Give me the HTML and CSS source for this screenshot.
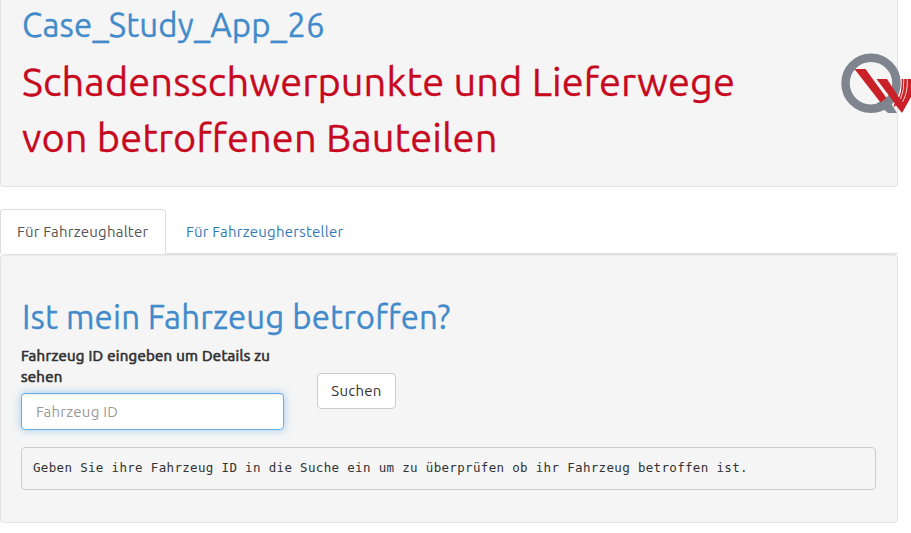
FILE: index.html
```html
<!DOCTYPE html>
<html lang="de">
<head>
<meta charset="utf-8">
<title>Case_Study_App_26</title>
<link rel="stylesheet" href="styles.css">
</head>
<body>
<header class="well intro">
  <h2 class="title app-name">Case_Study_App_26</h2>
  <h1 class="headline">Schadensschwerpunkte und Lieferwege<br>von betroffenen Bauteilen</h1>
  <svg class="logo" viewBox="0 0 80 90" width="80" height="90" aria-hidden="true">
    <circle cx="40" cy="43.300" r="25.500" fill="none" stroke="#7f858f" stroke-width="8.500"/>
    <path d="M45 64L56 57L66 73H57L50 67Z" fill="#7f858f"/>
    <path d="M23.500 29H34.500L55.500 58L49.500 62.500Z" fill="#c92127"/>
    <path d="M45.500 39H56L68 57.500Q71.500 49 70.500 39H84V50L71 73L65 65.500L62.500 67L63.500 63Z" fill="#c92127"/>
    <path d="M72.800 39Q73.500 50 69.500 59M76.300 39Q77 52 71.500 62" fill="none" stroke="#fff" stroke-width=".8"/>
  </svg>
</header>
<nav class="tabs">
  <a class="tab active">Für Fahrzeughalter</a>
  <a class="tab">Für Fahrzeughersteller</a>
</nav>
<main class="well panel">
  <h2 class="title question">Ist mein Fahrzeug betroffen?</h2>
  <div class="search">
    <div class="field">
      <label for="vehicle">Fahrzeug ID eingeben um Details zu<br>sehen</label>
      <input id="vehicle" type="text" placeholder="Fahrzeug ID">
    </div>
    <button type="button">Suchen</button>
  </div>
  <pre>Geben Sie ihre Fahrzeug ID in die Suche ein um zu überprüfen ob ihr Fahrzeug betroffen ist.</pre>
</main>
</body>
</html>
```
FILE: styles.css
```css
* { box-sizing: border-box; }
body {
  margin: 0;
  width: 911px;
  height: 533px;
  overflow: hidden;
  background: #fff;
  color: #333;
  font: 15px/21px Ubuntu, "Noto Sans", sans-serif;
  letter-spacing: .25px;
}
.well {
  width: 898px;
  border: 1px solid #e3e3e3;
  border-radius: 4px;
  background: #f5f5f5;
  box-shadow: inset 0 1px 1px rgba(0, 0, 0, .05);
}
.intro {
  position: relative;
  height: 187px;
  padding: 6px 20px 0;
  border-top: 0;
  border-radius: 0 0 4px 4px;
  box-shadow: none;
}
.title, .headline {
  margin: 0;
  font-weight: 400;
  white-space: nowrap;
  -webkit-text-stroke: .3px currentColor;
}
.title { padding-left: 1px; color: #428bca; font-size: 33px; line-height: 38px; letter-spacing: .16px; }
.headline { margin-top: 10px; padding-left: 1px; color: #c7091f; font-size: 39.8px; line-height: 56px; letter-spacing: .09px; }
.logo { position: absolute; left: 830px; top: 40px; }
.tabs {
  display: flex;
  width: 898px;
  height: 45px;
  margin-top: 22px;
  border-bottom: 1px solid #ddd;
}
.tab {
  height: 45px;
  padding: 11px 16px;
  margin-right: 3px;
  border: 1px solid transparent;
  border-radius: 4px 4px 0 0;
  color: #337ab7;
  white-space: nowrap;
}
.tab.active { width: 166px; border-color: #ddd; border-bottom-color: #fff; color: #555; background: #fff; }
.panel { height: 269px; padding: 43px 20px 0; }
.search { display: flex; align-items: flex-start; height: 102px; margin-top: 9px; }
.field { width: 264px; }
label {
  display: block;
  height: 48px;
  white-space: nowrap;
  letter-spacing: .28px;
  -webkit-text-stroke: .7px currentColor;
}
input {
  display: block;
  width: 263px;
  height: 37px;
  padding: 0 14px;
  border: 1px solid #66afe9;
  border-radius: 4px;
  outline: 0;
  background: #fff;
  font: inherit;
  letter-spacing: .25px;
  box-shadow: inset 0 1px 1px rgba(0, 0, 0, .075), 0 0 8px rgba(102, 175, 233, .6);
}
input::placeholder { color: #999; opacity: 1; }
button {
  width: 79px;
  height: 36px;
  margin: 28px 0 0 32px;
  padding: 0 0 2px;
  border: 1px solid #ccc;
  border-radius: 4px;
  background: #fff;
  color: #333;
  font: inherit;
  letter-spacing: .25px;
}
pre {
  width: 855px;
  height: 43px;
  margin: 0;
  padding: 10px 11px;
  border: 1px solid #ccc;
  border-radius: 4px;
  background: #f5f5f5;
  font: 12.5px/20px Consolas, "DejaVu Sans Mono", monospace;
  letter-spacing: .33px;
}
```
